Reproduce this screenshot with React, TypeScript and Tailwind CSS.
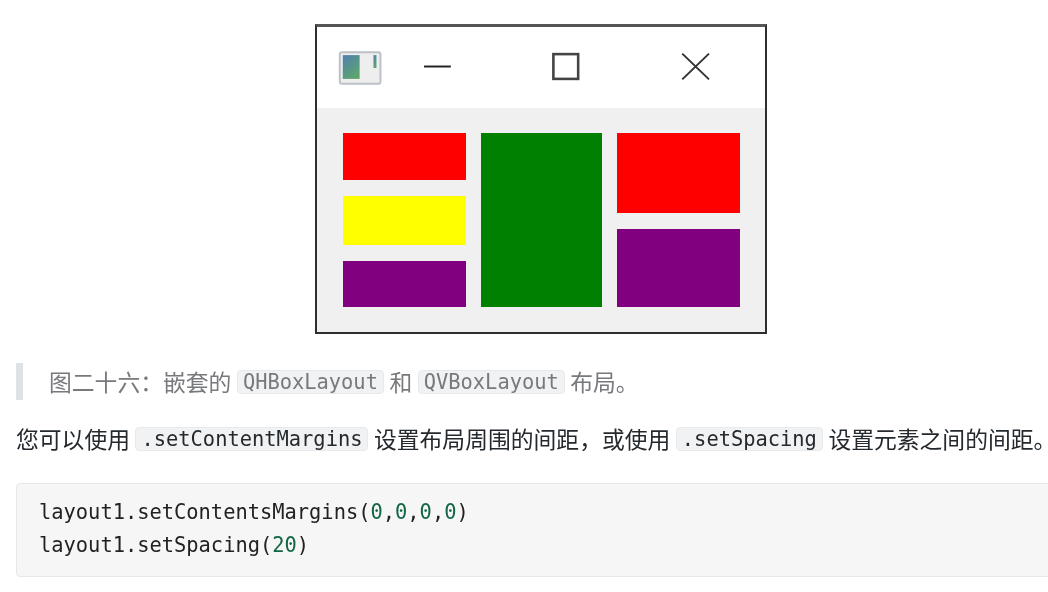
export default function App() {
  const sans = '"Noto Sans CJK SC", "Noto Sans", sans-serif';
  const code = "rounded-[4px] bg-[#f1f2f3] border border-[#e8e9ea] px-[5px] mx-[5.5px] text-[20.4px] leading-[22px] [font-family:'DejaVu_Sans_Mono',monospace]";
  const num = "text-[#116644]";
  return (
    <div className="w-[1048px] h-[592px] overflow-hidden bg-white pl-4" style={{ fontFamily: sans }}>
      <div className="w-[1050px] pt-[24px] blur-[0.3px]">
        <div className="mx-auto w-[452px] h-[310px] border-[2.5px] border-t-[3px] border-t-[#555555] border-[#2e2e2e] flex flex-col bg-white">
          <div className="h-[81px] shrink-0 flex items-center">
            <svg width="452" height="81" viewBox="0 0 452 81" className="blur-[0.4px]">
              <rect x="23" y="25" width="41" height="32" rx="2" fill="#eeeeee" stroke="#bcc0c8" strokeWidth="2" />
              <defs>
                <linearGradient id="g" x1="0" y1="0" x2="0.6" y2="1">
                  <stop offset="0" stopColor="#4f7fb0" />
                  <stop offset="1" stopColor="#5ca56f" />
                </linearGradient>
              </defs>
              <rect x="26" y="28" width="17" height="24" fill="url(#g)" />
              <rect x="57" y="28" width="3" height="13" fill="url(#g)" />
              <path d="M108 39.5H135" stroke="#222" strokeWidth="2" />
              <rect x="238.5" y="27" width="25" height="25" fill="none" stroke="#444444" strokeWidth="2.6" />
              <path d="M368.5 26.5L395.5 52.5M395.5 26.5L368.5 52.5" stroke="#333" strokeWidth="2" />
            </svg>
          </div>
          <div className="flex-1 bg-[#f0f0f0] flex gap-[15px] pl-[25.5px] pt-[25px]">
            <div className="w-[123px] flex flex-col gap-[15.5px]">
              <div className="h-[47px] bg-[#ff0000]" />
              <div className="h-[49.5px] bg-[#ffff00]" />
              <div className="h-[46.5px] bg-[#800080]" />
            </div>
            <div className="w-[121px] h-[174px] bg-[#008000]" />
            <div className="w-[123px] flex flex-col gap-[16px]">
              <div className="h-[80px] bg-[#ff0000]" />
              <div className="h-[78px] bg-[#800080]" />
            </div>
          </div>
        </div>
        <div className="mt-[29px] h-[37px] border-l-[7px] border-[#dfe2e5] pl-[26px] flex items-center text-[22.8px] leading-[37px] text-[#77797c] whitespace-nowrap">
          <span>{"图二十六\uFF1A嵌套的"}</span>
          <span className={code}>QHBoxLayout</span>
          <span>和</span>
          <span className={code}>QVBoxLayout</span>
          <span>布局。</span>
        </div>
        <div className="mt-[20px] h-[38px] flex items-center text-[22.8px] leading-[38px] text-[#24292e] whitespace-nowrap">
          <span>您可以使用</span>
          <span className={code}>.setContentMargins</span>
          <span>{"设置布局周围的间距\uFF0C或使用"}</span>
          <span className={code}>.setSpacing</span>
          <span>设置元素之间的间距。</span>
        </div>
        <pre className="mt-[25px] h-[94px] rounded-[4px] border border-[#e8e8e8] bg-[#f6f6f6] pl-[22px] pt-[12px] text-[20.4px] leading-[33px] text-[#222] [font-family:'DejaVu_Sans_Mono',monospace]">
          <div>layout1.setContentsMargins(<span className={num}>0</span>,<span className={num}>0</span>,<span className={num}>0</span>,<span className={num}>0</span>)</div>
          <div>layout1.setSpacing(<span className={num}>20</span>)</div>
        </pre>
      </div>
    </div>
  );
}
